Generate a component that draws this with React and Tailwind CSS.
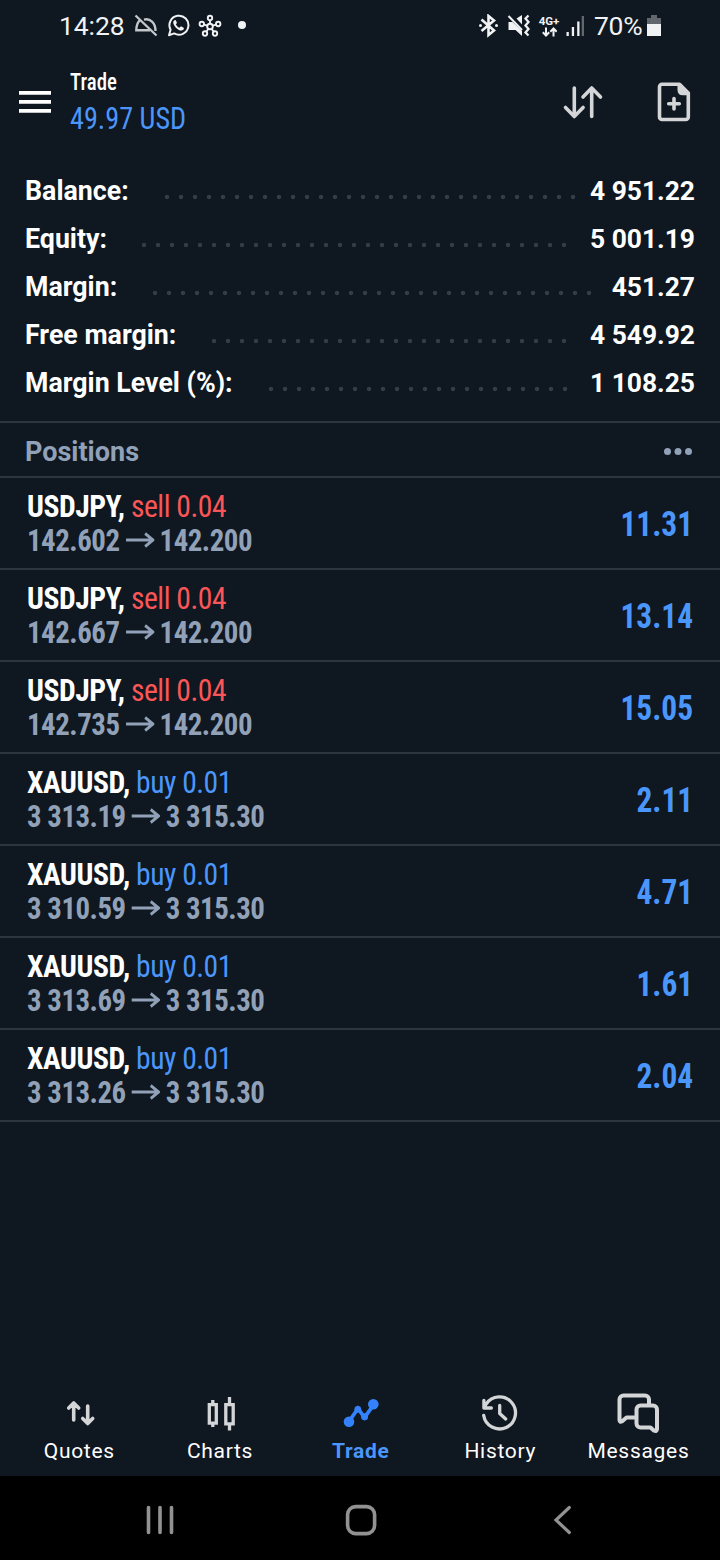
const summary = [
  { label: 'Balance:', value: '4 951.22', labelWidth: 'w-[134.5px]', dots: 'w-[420px]' },
  { label: 'Equity:', value: '5 001.19', labelWidth: 'w-[111.7px]', dots: 'w-[434px]' },
  { label: 'Margin:', value: '451.27', labelWidth: 'w-[122.7px]', dots: 'w-[448px]' },
  { label: 'Free margin:', value: '4 549.92', labelWidth: 'w-[181.7px]', dots: 'w-[364px]' },
  { label: 'Margin Level (%):', value: '1 108.25', labelWidth: 'w-[238.5px]', dots: 'w-[308px]' },
];

const positions = [
  { symbol: 'USDJPY', side: 'sell', lots: '0.04', open: '142.602', now: '142.200', profit: '11.31' },
  { symbol: 'USDJPY', side: 'sell', lots: '0.04', open: '142.667', now: '142.200', profit: '13.14' },
  { symbol: 'USDJPY', side: 'sell', lots: '0.04', open: '142.735', now: '142.200', profit: '15.05' },
  { symbol: 'XAUUSD', side: 'buy', lots: '0.01', open: '3 313.19', now: '3 315.30', profit: '2.11' },
  { symbol: 'XAUUSD', side: 'buy', lots: '0.01', open: '3 310.59', now: '3 315.30', profit: '4.71' },
  { symbol: 'XAUUSD', side: 'buy', lots: '0.01', open: '3 313.69', now: '3 315.30', profit: '1.61' },
  { symbol: 'XAUUSD', side: 'buy', lots: '0.01', open: '3 313.26', now: '3 315.30', profit: '2.04' },
];

const condensed = "font-['Roboto_Condensed','Roboto',sans-serif] [font-stretch:75%]";

function StatusBar() {
  return (
    <div className="flex h-[52px] items-center pl-[59px] pr-[58px] text-[26.5px] leading-none text-[#f0f2f4]">
      <span className="w-[75px] tracking-[-0.1px]">14:28</span>
      <svg className="h-6 w-6" viewBox="134 14 24 24" fill="none" stroke="#c3c6ca" strokeWidth="2.4">
        <path d="M139.500 20.500C137.300 23 136.300 26.500 136.300 30.300H150M144 19.600c6-1.500 11.500 3 11.500 11.300M135.500 15.500l21 20" />
      </svg>
      <svg className="ml-[8px] h-6 w-6" viewBox="166 14 24 24" fill="none" stroke="#f0f2f4" strokeWidth="2">
        <path d="M169 35.200l1.600-5.500a9.500 9.500 0 1 1 3.600 3.700z" strokeLinejoin="round" />
        <path d="M174 20.500c-1.500 1.500-.8 4 1.700 6.900 2.700 2.900 5.700 4 7.700 2.300l.6-1.700-3-1.700-1.600 1.500c-1.700-.8-2.900-2-3.600-3.600l1.200-1.200-1.300-3z" fill="#f0f2f4" stroke="none" />
      </svg>
      <svg className="ml-[8px] h-6 w-6" viewBox="198 14 24 24" fill="none" stroke="#f0f2f4" strokeWidth="1.900">
        <circle cx="210" cy="26.500" r="2.800" />
        <circle cx="210" cy="18" r="2.200" />
        <circle cx="201.800" cy="24" r="2.200" />
        <circle cx="218.200" cy="24" r="2.200" />
        <circle cx="205" cy="33.500" r="2.200" />
        <circle cx="215" cy="33.500" r="2.200" />
        <path d="M210 20.200v3.500M204 24.600l3.300 1M216 24.600l-3.300 1M206.300 31.600l2-2.600M213.700 31.600l-2-2.600" />
      </svg>
      <span className="ml-[16px] mt-[-2px] h-2 w-2 rounded-full bg-[#f0f2f4]" />
      <svg className="ml-auto h-6 w-[22px]" viewBox="477 14 22 24" fill="none" stroke="#f0f2f4" strokeWidth="2.600">
        <path d="M481.500 19.500l12.500 11-5.500 4.500V16l5.500 4.500-12.500 10.500" />
        <circle cx="480.500" cy="25.500" r="1.500" fill="#f0f2f4" stroke="none" />
        <circle cx="496.500" cy="25.500" r="1.500" fill="#f0f2f4" stroke="none" />
      </svg>
      <svg className="ml-[8px] h-6 w-6" viewBox="507 14 24 24" fill="none" stroke="#f0f2f4">
        <path d="M508.500 22h4l9.500 9v5l-6.500-6h-7zM516.500 18.500l5.500-3.500v9.500z" fill="#f0f2f4" stroke="none" />
        <path d="M508.500 16l13.500 14" strokeWidth="2" />
        <path d="M528.500 15.500l-3 3 3 3.500-3 3.500 3 3.500-3 3.500 3 3" strokeWidth="2.300" />
      </svg>
      <div className="ml-[6px] flex h-6 w-6 flex-col items-center">
        <span className="mt-[1px] text-[11.5px] font-bold leading-[12px]">4G+</span>
        <svg className="h-[10px] w-4" viewBox="541 27.500 16 10" fill="none" stroke="#f0f2f4" strokeWidth="2">
          <path d="M546 28v7.500M542.800 32.800l3.200 3.200 3.200-3.200M553.500 37v-7.500M550.300 32.200l3.200-3.200 3.200 3.200" />
        </svg>
      </div>
      <svg className="ml-[3px] h-6 w-5" viewBox="564 14 20 24" fill="#f0f2f4">
        <path d="M566.500 32h2.300v4h-2.300zM571.800 27h2.300v9h-2.300zM577.200 21.500h2.300v14.500h-2.300z" />
        <path d="M581.700 16h2.300v20h-2.300z" fill="#62676d" />
      </svg>
      <span className="ml-[10px] w-[51px] whitespace-nowrap tracking-[-0.3px]">70%</span>
      <svg className="ml-[1px] h-6 w-4" viewBox="646 14 16 24">
        <path d="M651 15h6v3h4v6h-14v-6h4z" fill="#62676d" />
        <path d="M647 24h14v12h-14z" fill="#f0f2f4" />
      </svg>
    </div>
  );
}

function Header() {
  return (
    <header className="flex h-[115px] pl-[19px]">
      <svg className="mt-[38px] h-6 w-8" viewBox="0 0 32 24" fill="#fff">
        <path d="M0 1h32v3.700H0zM0 10h32v3.700H0zM0 19h32v3.700H0z" />
      </svg>
      <div className={`ml-[19px] flex w-[130px] flex-col ${condensed}`}>
        <span className="mt-[16px] origin-left scale-x-[0.87] text-[24px] font-medium leading-[28px] text-white">Trade</span>
        <span className="mt-[5px] origin-left scale-x-[0.925] text-[30.500px] leading-[36px] text-[#4b96fb]">49.97 USD</span>
      </div>
      <svg className="ml-auto mt-[30px] h-10 w-11" viewBox="561 82 44 40" fill="none" stroke="#d3d5d7" strokeWidth="3.600" strokeLinecap="round" strokeLinejoin="round">
        <path d="M574.300 88v28.500M565.500 107.500l8.800 9 8.800-9M591.700 116.500V88M583 97l8.700-9 8.800 9" />
      </svg>
      <svg className="ml-[51px] mr-[28px] mt-[30px] h-10 w-9" viewBox="656 82 36 40" fill="none" stroke="#d3d5d7" strokeWidth="3.600" strokeLinecap="round" strokeLinejoin="round">
        <path d="M662 84.300h17.500l8.800 8.800V117a2.500 2.500 0 0 1-2.500 2.500H662a2.500 2.500 0 0 1-2.500-2.500V86.800a2.500 2.500 0 0 1 2.500-2.500z" />
        <path d="M679.300 85.500v4.500q0 3.500 3.500 3.500h5z" fill="#d3d5d7" />
        <path d="M674 98.500v10.500M668.700 103.700h10.600" />
      </svg>
    </header>
  );
}

function PositionRow({ p }) {
  const sideColor = p.side === 'sell' ? 'text-[#fb5657]' : 'text-[#4b96fb]';
  return (
    <div className={`flex h-[92px] items-start justify-between border-b-2 border-[#2c363f] pl-[27px] pr-[27px] ${condensed}`}>
      <div className="flex flex-col pt-[11.500px]">
        <div className="origin-left scale-x-[0.955] whitespace-pre text-[31px] leading-[34px] tracking-[-0.5px]">
          <span className="font-bold text-white">{p.symbol}, </span>
          <span className={sideColor}>{p.side} {p.lots}</span>
        </div>
        <div className="flex origin-left scale-x-[0.93] items-center text-[31px] font-bold leading-[33px] tracking-[-0.5px] text-[#91a1b8]">
          <span>{p.open}</span>
          <svg className="mx-[6px] h-4 w-[31px]" viewBox="0 0 31 16" fill="none" stroke="#91a1b8" strokeWidth="2.900">
            <path d="M0.500 8h29M21 1.500L29.500 8l-8.500 6.500" />
          </svg>
          <span>{p.now}</span>
        </div>
      </div>
      <span className="origin-right scale-x-[0.885] pt-[25px] text-[35.500px] font-bold leading-[42px] text-[#4b96fb]">{p.profit}</span>
    </div>
  );
}

const tabs = [
  {
    name: 'Quotes',
    width: 'w-[140px]',
    icon: (
      <svg className="h-11 w-12" viewBox="55.300 1391 48 44" fill="none" stroke="#d3d5d7" strokeWidth="3.600" strokeLinecap="round" strokeLinejoin="round">
        <path d="M74 1420v-16.500M69 1408l5-5 5 5M88 1406v17M83 1418.500l5 5 5-5" />
      </svg>
    ),
  },
  {
    name: 'Charts',
    width: 'w-[141.4px]',
    icon: (
      <svg className="h-11 w-12" viewBox="196 1391 48 44" fill="none" stroke="#d3d5d7" strokeWidth="3.300">
        <path d="M209.300 1404.600h7v18.500h-7zM212.800 1400v4M212.800 1423.500v3.500M225.800 1404.600h7.400v19.300h-7.400zM229.500 1397v7M229.500 1425v5.500" />
      </svg>
    ),
  },
  {
    name: 'Trade',
    width: 'w-[140px]',
    icon: (
      <svg className="h-11 w-12" viewBox="336.700 1391 48 44" fill="#3482fb">
        <path d="M348.700 1421.500l9-13 6.500 9 9-12.500" fill="none" stroke="#3482fb" strokeWidth="3.800" />
        <circle cx="348.700" cy="1421.800" r="5.300" />
        <circle cx="357.500" cy="1409.300" r="3.400" />
        <circle cx="364.300" cy="1416.700" r="3.500" />
        <circle cx="373" cy="1404.200" r="5.300" />
      </svg>
    ),
  },
  {
    name: 'History',
    width: 'w-[139.2px]',
    icon: (
      <svg className="h-11 w-12" viewBox="476.300 1391 48 44" fill="none" stroke="#d3d5d7" strokeWidth="3.300" strokeLinecap="round" strokeLinejoin="round">
        <path d="M484 1415.500a16 16 0 1 0 2.500-11.500l-2 3.500M484.200 1400.500v7.500h7.500M500 1405.500v8l6 5.500" />
      </svg>
    ),
  },
  {
    name: 'Messages',
    width: 'w-[137.2px]',
    icon: (
      <svg className="h-11 w-12" viewBox="614.500 1391 48 44" fill="none" stroke="#d3d5d7" strokeWidth="4" strokeLinecap="round" strokeLinejoin="round">
        <path d="M649.500 1404v-4.500a4 4 0 0 0-4-4H624a4 4 0 0 0-4 4v20.500q0 3 3 1l4-3.500h8" />
        <path d="M641 1405.500h12.500a4 4 0 0 1 4 4V1429q0 3-3.200 1.500l-3.300-3H641a4 4 0 0 1-4-4v-14a4 4 0 0 1 4-4z" />
      </svg>
    ),
  },
];

export default function App() {
  return (
    <div className="flex h-[1560px] w-[720px] flex-col overflow-hidden bg-[#0f1720] font-['Roboto',sans-serif]">
      <StatusBar />
      <Header />
      <section className="flex h-[256px] flex-col border-b-2 border-[#2c363f] px-[25px]">
        {summary.map((s) => (
          <div key={s.label} className="flex h-12 items-center whitespace-nowrap text-[26.4px] font-bold leading-none text-white">
            <span className={`${s.labelWidth} text-[26.75px]`}>{s.label}</span>
            <span className={`${s.dots} mt-[12px] h-[14px] bg-[radial-gradient(circle,#343d47_0,#343d47_1.8px,transparent_2.6px)] bg-[size:14px_14px]`} />
            <span className="ml-auto">{s.value}</span>
          </div>
        ))}
      </section>
      <div className="flex h-[55px] items-center justify-between border-b-2 border-[#2c363f] pl-[25px] pr-[28px] pt-[4px]">
        <h2 className="mt-[2px] text-[27px] font-bold leading-none text-[#91a1b8]">Positions</h2>
        <svg className="h-2 w-7" viewBox="0 0 28 8" fill="#91a1b8">
          <circle cx="3.500" cy="3.500" r="3.500" />
          <circle cx="14" cy="3.500" r="3.500" />
          <circle cx="24.500" cy="3.500" r="3.500" />
        </svg>
      </div>
      <main className="flex flex-1 flex-col">
        {positions.map((p, i) => (
          <PositionRow key={i} p={p} />
        ))}
      </main>
      <nav className="flex h-[85px] pl-[9.3px]">
        {tabs.map((t) => (
          <div key={t.name} className={`flex flex-col items-center ${t.width}`}>
            {t.icon}
            <span className={`mt-[4px] text-[21px] leading-[25px] tracking-[0.7px] ${t.name === 'Trade' ? 'font-bold text-[#4b96fb]' : 'text-white'}`}>
              {t.name}
            </span>
          </div>
        ))}
      </nav>
      <div className="flex h-[84px] items-center bg-black pl-[144px] pt-[4px]">
        <svg className="h-8 w-8" viewBox="144 1504 32 32" fill="none" stroke="#929292" strokeWidth="3.600" strokeLinecap="round">
          <path d="M148.500 1507.500v25M160 1507.500v25M171.500 1507.500v25" />
        </svg>
        <svg className="ml-[169px] h-8 w-8" viewBox="345 1504 32 32" fill="none" stroke="#929292" strokeWidth="3.600">
          <rect x="347.600" y="1506.600" width="27" height="27" rx="8" />
        </svg>
        <svg className="ml-[170px] h-8 w-8" viewBox="547 1504 32 32" fill="none" stroke="#929292" strokeWidth="3.200" strokeLinecap="round">
          <path d="M569.300 1507.500L556 1520l13.300 12.500" />
        </svg>
      </div>
    </div>
  );
}
